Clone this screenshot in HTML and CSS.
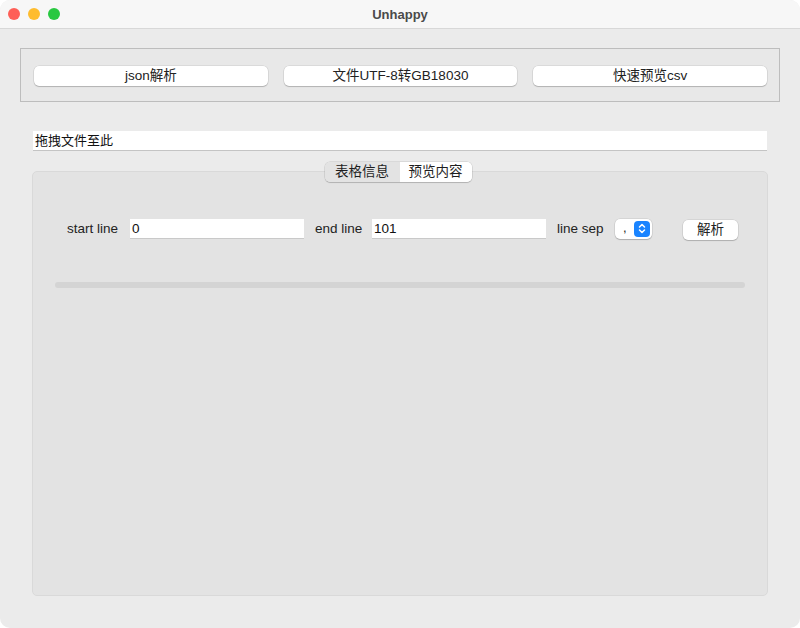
FILE: index.html
```html
<!DOCTYPE html>
<html lang="zh">
<head>
<meta charset="utf-8">
<title>Unhappy</title>
<link rel="stylesheet" href="styles.css">
</head>
<body>
<div class="window">
  <div class="titlebar">
    <div class="lights">
      <span class="light red"></span>
      <span class="light yellow"></span>
      <span class="light green"></span>
    </div>
    <div class="title">Unhappy</div>
  </div>
  <div class="content">
    <div class="group">
      <button class="btn">json解析</button>
      <button class="btn">文件UTF-8转GB18030</button>
      <button class="btn">快速预览csv</button>
    </div>
    <div class="drop">拖拽文件至此</div>
    <div class="tabwidget">
      <div class="tabs">
        <span class="tab sel">表格信息</span>
        <span class="tab">预览内容</span>
      </div>
      <div class="pane">
        <div class="row">
          <span class="lbl l1">start line</span>
          <span class="field">0</span>
          <span class="lbl l2">end line</span>
          <span class="field">101</span>
          <span class="lbl l3">line sep</span>
          <span class="combo"><span class="cval">,</span><span class="stepper"><svg width="10" height="13" viewBox="0 0 10 13"><path d="M2.5 5 L5 2.5 L7.5 5 M2.5 8 L5 10.5 L7.5 8" fill="none" stroke="#fff" stroke-width="1.5" stroke-linecap="round" stroke-linejoin="round"/></svg></span></span>
          <button class="btn small">解析</button>
        </div>
        <div class="progress"></div>
      </div>
    </div>
  </div>
</div>
</body>
</html>
```
FILE: styles.css
```css
* { box-sizing: border-box; }
html, body { margin: 0; padding: 0; background: #ffffff; }
body {
  font-family: "Liberation Sans", "Noto Sans CJK SC", sans-serif;
  font-size: 13px;
  color: #1f1f1f;
}
.window {
  width: 800px;
  height: 628px;
  background: #ebebeb;
  border-radius: 10px;
  overflow: hidden;
  display: flex;
  flex-direction: column;
}
.titlebar {
  height: 29px;
  flex: none;
  background: #f7f7f7;
  border-bottom: 1px solid #d8d8d8;
  display: grid;
  grid-template-columns: 1fr;
  align-items: center;
}
.lights, .title { grid-row: 1; grid-column: 1; }
.lights {
  display: flex;
  gap: 8px;
  padding-left: 8px;
  align-self: center;
}
.light {
  width: 12px;
  height: 12px;
  border-radius: 50%;
  display: block;
}
.red { background: #fe5f57; }
.yellow { background: #febc2e; }
.green { background: #28c840; }
.title {
  text-align: center;
  font-weight: bold;
  font-size: 13px;
  color: #4a4a4a;
  font-family: "Liberation Sans", "Noto Sans CJK SC", sans-serif;
}
.content {
  padding: 19px 32px 0 20px;
  flex: 1;
  display: flex;
  flex-direction: column;
}
.group {
  width: 760px;
  height: 54px;
  border: 1px solid #bdbdbd;
  background: #e8e8e8;
  padding: 17px 12px 0 13px;
  display: flex;
  gap: 16px;
  align-items: flex-start;
}
.btn {
  font-family: "Liberation Sans", "Noto Sans CJK SC", sans-serif;
  font-size: 13.5px;
  color: #222;
  background: #ffffff;
  border: none;
  border-radius: 5px;
  box-shadow: 0 0 0 0.5px rgba(0,0,0,0.12), 0 1px 1px rgba(0,0,0,0.18);
  height: 20px;
  padding: 0;
  line-height: 20px;
}
.group .btn { flex: 1; }
.drop {
  margin: 29px 0 0 13px;
  width: 734px;
  height: 20px;
  background: #fff;
  border-bottom: 1px solid #c4c4c4;
  padding-left: 2px;
  line-height: 19px;
  font-size: 13px;
  color: #111;
}
.tabwidget {
  margin: 11px 0 0 12px;
  width: 736px;
  display: flex;
  flex-direction: column;
  align-items: center;
}
.tabs {
  display: flex;
  height: 20px;
  margin-bottom: -11px;
  position: relative;
  z-index: 1;
  margin-left: -4px;
  border-radius: 5px;
  overflow: hidden;
  box-shadow: 0 0 0 0.5px rgba(0,0,0,0.15), 0 1px 1px rgba(0,0,0,0.15);
}
.tab {
  display: block;
  height: 20px;
  line-height: 19px;
  background: #fff;
  font-size: 13.5px;
  color: #1e1e1e;
  text-align: center;
  padding: 0;
}
.tab.sel {
  background: #e3e3e3;
  width: 75px;
}
.tab:not(.sel) { width: 72px; }
.pane {
  width: 736px;
  height: 425px;
  background: #e3e3e3;
  border: 1px solid #d9d9d9;
  border-radius: 5px;
  padding: 46px 0 0 34px;
}
.row {
  display: flex;
  align-items: center;
  height: 21px;
}
.lbl {
  display: block;
  font-size: 13.5px;
  color: #222;
}
.l1 { width: 63px; }
.l2 { width: 57px; margin-left: 11px; }
.l3 { width: 58px; margin-left: 11px; }
.field {
  display: block;
  width: 174px;
  height: 20px;
  background: #fff;
  border-bottom: 1px solid #c9c9c9;
  line-height: 19px;
  padding-left: 2px;
  font-size: 13.5px;
  color: #111;
}
.combo {
  display: flex;
  align-items: center;
  width: 37px;
  height: 20px;
  background: #fff;
  border-radius: 5px;
  box-shadow: 0 0 0 0.5px rgba(0,0,0,0.12), 0 1px 1px rgba(0,0,0,0.18);
  padding: 0 2px 0 8px;
  justify-content: space-between;
}
.cval { font-size: 13px; line-height: 14px; margin-top: -2px; }
.stepper {
  display: flex;
  align-items: center;
  justify-content: center;
  width: 16px;
  height: 16px;
  background: #1a84ff;
  border-radius: 4px;
}
.btn.small {
  width: 55px;
  margin-left: 31px;
  margin-top: 2px;
}
.progress {
  margin-top: 43px;
  margin-left: -12px;
  width: 690px;
  height: 6px;
  background: #d4d4d4;
  border-radius: 3px;
}
```
